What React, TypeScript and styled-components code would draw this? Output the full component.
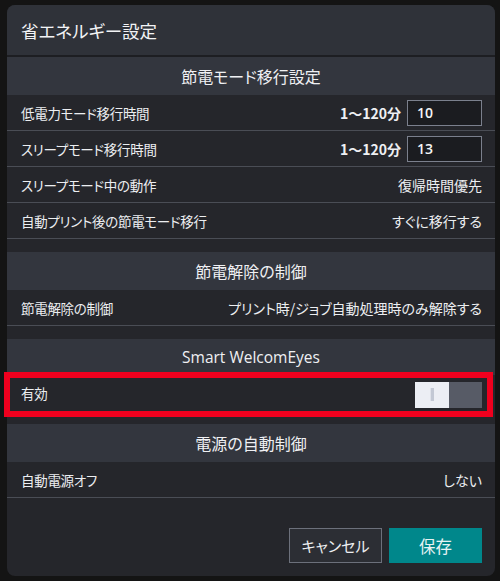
import styled, { createGlobalStyle } from "styled-components";

const GlobalStyle = createGlobalStyle`
    html, body {
        margin: 0;
        padding: 0;
        background: #141414;
    }
    body {
        font-family: "Noto Sans CJK JP", "Noto Sans", "Liberation Sans", sans-serif;
        font-feature-settings: "palt";
        color: #eceef1;
    }
`;

type Row = { label: string; value?: string; range?: string; input?: string };

const transitionRows: Row[] = [
    { label: "低電力モード移行時間", range: "1～120分", input: "10" },
    { label: "スリープモード移行時間", range: "1～120分", input: "13" },
    { label: "スリープモード中の動作", value: "復帰時間優先" },
    { label: "自動プリント後の節電モード移行", value: "すぐに移行する" },
];

export default function App() {
    return (
        <>
            <GlobalStyle />
            <Page>
                <Dialog>
                    <TitleBar>省エネルギー設定</TitleBar>

                    <SectionHeader>節電モード移行設定</SectionHeader>
                    {transitionRows.map((row) => (
                        <SettingRow key={row.label}>
                            <Label>{row.label}</Label>
                            {row.input ? (
                                <Control>
                                    <Range>{row.range}</Range>
                                    <NumberInput defaultValue={row.input} />
                                </Control>
                            ) : (
                                <Value>{row.value}</Value>
                            )}
                        </SettingRow>
                    ))}

                    <SectionHeader $gap>節電解除の制御</SectionHeader>
                    <SettingRow>
                        <Label>節電解除の制御</Label>
                        <Value>プリント時/ジョブ自動処理時のみ解除する</Value>
                    </SettingRow>

                    <SectionHeader $gap $short $latin>Smart WelcomEyes</SectionHeader>
                    <HighlightRow>
                        <Label>有効</Label>
                        <Toggle>
                            <Knob>
                                <Grip />
                            </Knob>
                            <Track />
                        </Toggle>
                    </HighlightRow>

                    <SectionHeader $gap>電源の自動制御</SectionHeader>
                    <SettingRow>
                        <Label>自動電源オフ</Label>
                        <Value>しない</Value>
                    </SettingRow>

                    <Footer>
                        <CancelButton>キャンセル</CancelButton>
                        <SaveButton>保存</SaveButton>
                    </Footer>
                </Dialog>
            </Page>
        </>
    );
}

/* ======= Styled Components ======= */

const Page = styled.div`
    width: 500px;
    height: 581px;
    padding: 5px 5px 5px 7px;
    box-sizing: border-box;
`;

const Dialog = styled.div`
    width: 488px;
    height: 571px;
    background: #25262b;
    border-radius: 8px;
    display: flex;
    flex-direction: column;
`;

const TitleBar = styled.div`
    height: 50px;
    display: flex;
    align-items: center;
    padding-left: 14px;
    font-size: 17.5px;
    color: #f2f3f5;
    background: #2f3239;
    border-bottom: 2px solid #1d1e22;
    border-radius: 8px 8px 0 0;
`;

const SectionHeader = styled.div<{ $gap?: boolean; $short?: boolean; $latin?: boolean }>`
    height: ${(p) => (p.$short ? "36px" : "38px")};
    margin-top: ${(p) => (p.$gap ? "13px" : "0")};
    display: flex;
    align-items: center;
    justify-content: center;
    font-size: ${(p) => (p.$latin ? "15.5px" : "16px")};
    font-family: ${(p) =>
        p.$latin ? `"Open Sans", "Noto Sans", sans-serif` : `"Noto Sans CJK JP", sans-serif`};
    color: #eff0f3;
    background: #33363e;
`;

const SettingRow = styled.div`
    height: 35px;
    display: flex;
    align-items: center;
    justify-content: space-between;
    padding: 0 13px 0 14px;
    border-bottom: 1px solid #4a4d55;
    font-size: 14px;
`;

const HighlightRow = styled(SettingRow)`
    position: relative;
    border-bottom: none;
    height: 36px;

    &::after {
        content: "";
        position: absolute;
        top: -3px;
        bottom: -6px;
        left: -3px;
        right: 2px;
        border: 6px solid #f0001e;
        pointer-events: none;
    }
`;

const Label = styled.span`
    color: #eceef1;
    font-size: 13.5px;
    letter-spacing: -0.3px;
`;

const Value = styled.span`
    color: #eceef1;
`;

const Control = styled.div`
    display: flex;
    align-items: center;
    gap: 6px;
`;

const Range = styled.span`
    font-weight: bold;
    font-size: 14px;
    color: #eef0f3;
`;

const NumberInput = styled.input`
    width: 75px;
    height: 26px;
    box-sizing: border-box;
    background: #1b1c20;
    border: 1px solid #7b808d;
    color: #f4f5f7;
    font-family: "Open Sans", "Noto Sans", sans-serif;
    font-weight: 600;
    font-size: 14px;
    padding: 0 9px;
    outline: none;
`;

const Toggle = styled.div`
    display: flex;
    width: 67px;
    height: 26px;
    margin-top: 3px;
`;

const Knob = styled.div`
    flex: 1;
    background: #eceef4;
    display: flex;
    align-items: center;
    justify-content: center;
`;

const Grip = styled.div`
    width: 3px;
    height: 13px;
    background: #c3c8d4;
    border-left: 1px solid #dfe2ea;
`;

const Track = styled.div`
    flex: 1;
    background: #575b66;
`;

const Footer = styled.div`
    margin-top: auto;
    display: flex;
    justify-content: flex-end;
    gap: 7px;
    padding: 0 13px 13px 0;
`;

const ButtonBase = styled.button`
    width: 93px;
    height: 35px;
    box-sizing: border-box;
    font-family: "Noto Sans CJK JP", "Noto Sans", sans-serif;
    font-feature-settings: "palt";
    font-size: 15px;
    cursor: pointer;
`;

const CancelButton = styled(ButtonBase)`
    background: #2c2e34;
    border: 1px solid #6c707b;
    color: #eceef1;
`;

const SaveButton = styled(ButtonBase)`
    background: #00878b;
    border: none;
    color: #e6f3f3;
    font-size: 16.5px;
`;
